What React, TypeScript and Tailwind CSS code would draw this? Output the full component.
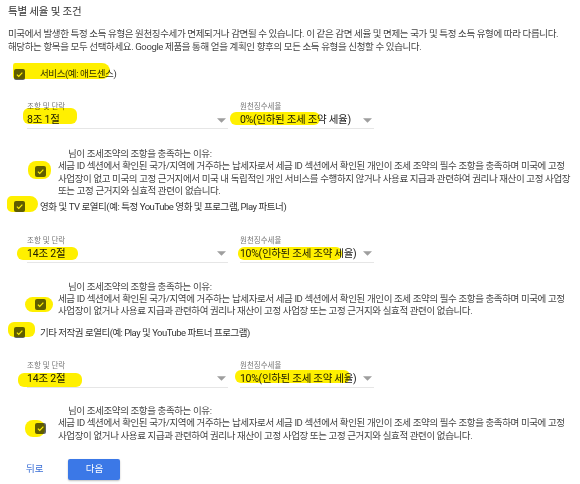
import React from "react";

const font = { fontFamily: "Roboto, 'Noto Sans CJK KR', sans-serif" };

function Check({ className = "" }: { className?: string }) {
  return (
    <span className={`inline-flex items-center justify-center w-[11px] h-[11px] rounded-[2px] bg-[#5f6368] shrink-0 ${className}`}>
      <svg width="9" height="9" viewBox="0 0 12 12">
        <path d="M2.5 6.2 L5 8.6 L9.8 3.6" fill="none" stroke="#fff" strokeWidth="1.6" />
      </svg>
    </span>
  );
}

function Arrow() {
  return (
    <svg width="9" height="5" viewBox="0 0 10 5" className="shrink-0">
      <path d="M0 0 L10 0 L5 5 Z" fill="#9e9e9e" />
    </svg>
  );
}

function Dropdowns({ art, rate }: { art: string; rate: string }) {
  return (
    <div className="flex pl-[19px] gap-[12px]">
      <div className="w-[201px]">
        <div className="text-[7.5px] text-[#777] leading-[10px]">조항 및 단락</div>
        <div className="flex items-center justify-between h-[17px] border-b border-[#e6e6e6] pr-[2px]">
          <span className="text-[10.5px] tracking-[-0.2px] text-[#222]">{art}</span>
          <Arrow />
        </div>
      </div>
      <div className="w-[134px]">
        <div className="text-[7.5px] text-[#777] leading-[10px]">원천징수세율</div>
        <div className="flex items-center justify-between h-[17px] border-b border-[#e6e6e6] pr-[2px]">
          <span className="text-[10.5px] tracking-[-0.3px] text-[#222] whitespace-nowrap">{rate}</span>
          <Arrow />
        </div>
      </div>
    </div>
  );
}

function Reason({ lines }: { lines: string[] }) {
  return (
    <div className="flex items-start pl-[27px]">
      <Check className="mt-[18px]" />
      <div className="pl-[12px] text-[9.5px] tracking-[-0.38px] leading-[12.4px] text-[#444] whitespace-nowrap">
        <div className="pl-[10px]">님이 조세조약의 조항을 충족하는 이유:</div>
        {lines.map((l, i) => (
          <div key={i}>{l}</div>
        ))}
      </div>
    </div>
  );
}

function HL({ x, y, w, h, r = "" }: { x: number; y: number; w: number; h: number; r?: string }) {
  return (
    <span
      className={`absolute bg-[#fff000] mix-blend-multiply rounded-[6px] ${r}`}
      style={{ left: x, top: y, width: w, height: h }}
    />
  );
}

export default function App() {
  const l1 = "세금 ID 섹션에서 확인된 국가/지역에 거주하는 납세자로서 세금 ID 섹션에서 확인된 개인이 조세 조약의 필수 조항을 충족하며 미국에 고정";
  const l2 = "사업장이 없거나 사용료 지급과 관련하여 권리나 재산이 고정 사업장 또는 고정 근거지와 실효적 관련이 없습니다.";
  return (
    <div className="relative w-[580px] h-[484px] overflow-hidden bg-white" style={font}>
      <div className="px-[8px] pt-[5px]">
        <div className="text-[10.5px] tracking-[-0.2px] text-[#333] leading-[14px]">특별 세율 및 조건</div>
        <div className="mt-[8px] text-[9.5px] tracking-[-0.37px] text-[#444] leading-[13px] whitespace-nowrap">
          <div>미국에서 발생한 특정 소득 유형은 원천징수세가 면제되거나 감면될 수 있습니다. 이 같은 감면 세율 및 면제는 국가 및 특정 소득 유형에 따라 다릅니다.</div>
          <div>해당하는 항목을 모두 선택하세요. Google 제품을 통해 얻을 계획인 향후의 모든 소득 유형을 신청할 수 있습니다.</div>
        </div>

        <div className="mt-[14px] flex items-center pl-[6px] h-[14px]">
          <Check />
          <span className="ml-[15px] text-[9.5px] tracking-[-0.4px] text-[#333]">서비스(예: 애드센스)</span>
        </div>
        <div className="mt-[21px]">
          <Dropdowns art="8조 1절" rate="0%(인하된 조세 조약 세율)" />
        </div>
        <div className="mt-[19px]">
          <Reason lines={[l1, "사업장이 없고 미국의 고정 근거지에서 미국 내 독립적인 개인 서비스를 수행하지 않거나 사용료 지급과 관련하여 권리나 재산이 고정 사업장", "또는 고정 근거지와 실효적 관련이 없습니다."]} />
        </div>

        <div className="mt-[2px] flex items-center pl-[6px] h-[14px]">
          <Check />
          <span className="ml-[15px] text-[9.5px] tracking-[-0.45px] text-[#333]">영화 및 TV 로열티(예: 특정 YouTube 영화 및 프로그램, Play 파트너)</span>
        </div>
        <div className="mt-[22px]">
          <Dropdowns art="14조 2절" rate="10%(인하된 조세 조약 세율)" />
        </div>
        <div className="mt-[18px]">
          <Reason lines={[l1, l2]} />
        </div>

        <div className="mt-[8px] flex items-center pl-[6px] h-[14px]">
          <Check />
          <span className="ml-[15px] text-[9.5px] tracking-[-0.5px] text-[#333]">기타 저작권 로열티(예: Play 및 YouTube 파트너 프로그램)</span>
        </div>
        <div className="mt-[21px]">
          <Dropdowns art="14조 2절" rate="10%(인하된 조세 조약 세율)" />
        </div>
        <div className="mt-[17px]">
          <Reason lines={[l1, l2]} />
        </div>

        <div className="mt-[17px] flex items-center pl-[18px] gap-[25px]">
          <span className="text-[9.5px] text-[#3b6fd6]">뒤로</span>
          <span className="inline-flex items-center justify-center w-[52px] h-[21px] rounded-[2px] bg-[#3b78e7] text-white text-[9.5px] shadow-[0_1px_2px_rgba(0,0,0,0.25)]">다음</span>
        </div>
      </div>

      <HL x={13} y={63} w={97} h={16} r="rounded-l-[3px] rounded-r-[10px]" />
      <HL x={23} y={108} w={54} h={16} />
      <HL x={230} y={112} w={90} h={13} />
      <HL x={28} y={161} w={23} h={18} r="rounded-[8px]" />
      <HL x={7} y={196} w={31} h={16} r="rounded-r-[10px]" />
      <HL x={17} y={247} w={61} h={13} />
      <HL x={238} y={247} w={104} h={13} />
      <HL x={25} y={297} w={28} h={15} r="rounded-[8px]" />
      <HL x={8} y={322} w={27} h={15} />
      <HL x={18} y={373} w={64} h={14} />
      <HL x={235} y={370} w={115} h={13} />
      <HL x={25} y={420} w={20} h={17} r="rounded-[8px]" />
    </div>
  );
}
